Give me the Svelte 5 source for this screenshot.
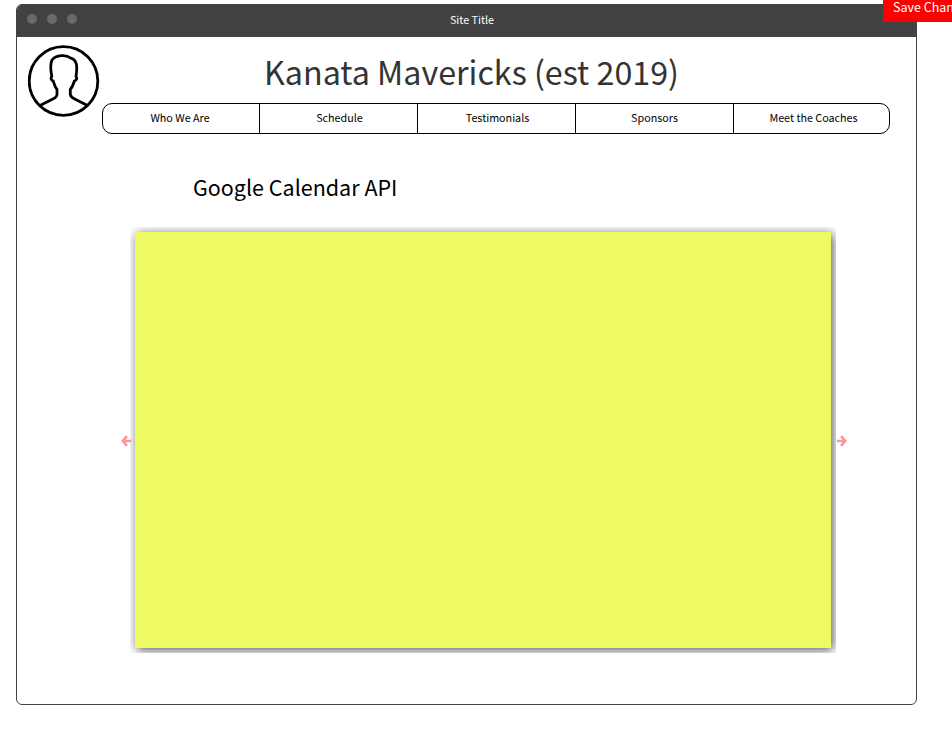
<script>
  const links = ['Who We Are', 'Schedule', 'Testimonials', 'Sponsors', 'Meet the Coaches'];
</script>

<div class="page">
  <section class="window">
    <header class="titlebar">
      <div class="dots"><i></i><i></i><i></i></div>
      <span class="site">Site Title</span>
    </header>
    <div class="masthead">
      <svg class="avatar" width="72" height="72" viewBox="0 0 72 72" fill="none" stroke="#000" stroke-linejoin="round">
        <circle cx="35.5" cy="36" r="34.3" stroke-width="2.8" />
        <path stroke-width="2.8" d="M12.5 60.2 L24.3 54.3 Q29 52.2 29 49.5 V44.5 C26.8 42 26 38.5 25.2 36 C22.8 35 22.5 32.8 23.8 31.4 C22.4 24 22.2 18.5 24 15 C28 9.6 38.5 9.6 42.2 12.8 C49.6 14.4 49.4 22.5 48 31.4 C49.4 32.8 49 35 46.4 36 C45.6 38.8 44.6 41.8 42.3 44.5 V49.5 Q42.8 52.2 47.2 54.3 L59 60.2" />
      </svg>
      <div class="heading">
        <h1>Kanata Mavericks (est 2019)</h1>
        <nav>
          {#each links as link}
            <a href="#top">{link}</a>
          {/each}
        </nav>
      </div>
    </div>
    <h2>Google Calendar API</h2>
    <div class="carousel">
      <svg width="10" height="12" viewBox="0 0 10 12" fill="none" stroke="#ff9696" stroke-width="2.6"><path d="M6 1.2 L1.7 6 L6 10.8 M1.5 6 H10" /></svg>
      <div class="frame"><div class="calendar"></div></div>
      <svg width="10" height="12" viewBox="0 0 10 12" fill="none" stroke="#ff9696" stroke-width="2.6"><path d="M4 1.2 L8.3 6 L4 10.8 M8.5 6 H0" /></svg>
    </div>
  </section>
  <div class="save">Save Changes</div>
</div>

<style>
  :global(body) { background: #fff; overflow: hidden; }
  .page {
    position: relative;
    width: 952px;
    height: 730px;
    box-sizing: border-box;
    padding: 4px 0 0 16px;
    overflow: hidden;
    font-family: "Noto Sans CJK SC", "Open Sans", sans-serif;
    color: #000;
  }
  .window {
    box-sizing: border-box;
    width: 901px;
    height: 701px;
    border: 1px solid #424242;
    border-radius: 6px;
    overflow: hidden;
  }
  .titlebar {
    height: 32px;
    background: #424242;
    display: grid;
    grid-template-columns: 100px 1fr 89px;
  }
  .dots { display: flex; gap: 10px; padding: 9px 0 0 10.4px; }
  .dots i { width: 10px; height: 10px; border-radius: 50%; background: #6a6a6a; }
  .site { color: #fff; font-size: 10.75px; line-height: 30px; text-align: center; }
  .masthead { display: flex; height: 97px; }
  .avatar { margin: 8px 0 0 11px; flex: none; }
  .heading { margin-left: 2px; width: 788px; flex: none; }
  h1 {
    margin: 0 0 0 -49px;
    height: 66px;
    line-height: 69px;
    font-size: 32.25px;
    font-weight: 400;
    color: #333;
    text-align: center;
    white-space: nowrap;
  }
  nav {
    box-sizing: border-box;
    display: flex;
    height: 31px;
    border: 1px solid #000;
    border-radius: 10px;
  }
  nav a {
    box-sizing: border-box;
    flex: none;
    width: 158px;
    padding-left: 2px;
    border-left: 1px solid #000;
    color: #000;
    font-size: 10.75px;
    line-height: 27px;
    text-align: center;
    text-decoration: none;
  }
  nav a:first-child { width: 156px; padding: 0 2px 0 0; border-left: 0; }
  nav a:nth-child(4) { padding: 0; }
  nav a:last-child { width: 156px; padding-left: 4px; }
  h2 {
    margin: 0;
    padding: 37px 0 0 176px;
    height: 56px;
    font-size: 21.5px;
    line-height: 31px;
    font-weight: 400;
  }
  .carousel { display: flex; align-items: center; padding-left: 104px; gap: 1px; }
  .carousel svg { margin-top: 2px; flex: none; }
  .frame { box-sizing: border-box; width: 706px; height: 426px; margin-left: -2px; padding: 5px; overflow: hidden; }
  .calendar { height: 100%; background: #edfa63; box-shadow: 2px 2px 10px #555; }
  .save {
    position: absolute;
    left: 883px;
    top: -8px;
    height: 30px;
    line-height: 30px;
    padding: 0 10px;
    background: #f00;
    color: #fff;
    font-size: 12.5px;
    white-space: nowrap;
  }
</style>
